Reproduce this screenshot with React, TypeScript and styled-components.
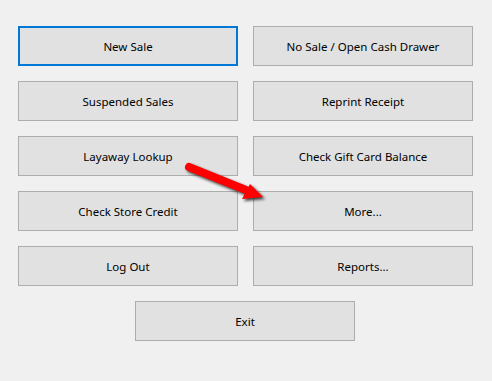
import React from 'react'
import styled, { createGlobalStyle } from 'styled-components'

const GlobalStyle = createGlobalStyle`
  html, body {
    margin: 0;
    padding: 0;
    background: #f0f0f0;
  }
`

const Window = styled.div`
  position: relative;
  width: 492px;
  height: 381px;
  background: #f0f0f0;
  box-sizing: border-box;
  padding: 26px 0 0 18px;
  font-family: "Noto Sans", "Open Sans", sans-serif;
`

const Grid = styled.div`
  display: grid;
  grid-template-columns: 220px 220px;
  grid-auto-rows: 40px;
  column-gap: 15px;
  row-gap: 15px;
  width: 455px;
`

const Button = styled.button<{ $focused?: boolean }>`
  box-sizing: border-box;
  width: 220px;
  height: 40px;
  margin: 0;
  padding: 0;
  background: #e1e1e1;
  border: ${(p) => (p.$focused ? '2px solid #0078d7' : '1px solid #adadad')};
  border-radius: 0;
  color: #000;
  font-family: "Noto Sans", "Open Sans", sans-serif;
  font-size: 11.5px;
  cursor: default;
`

const ExitRow = styled.div`
  grid-column: 1 / span 2;
  padding-left: 117px;
`

const Overlay = styled.svg`
  position: absolute;
  left: 180px;
  top: 155px;
  pointer-events: none;
`

const buttons = [
  'New Sale',
  'No Sale / Open Cash Drawer',
  'Suspended Sales',
  'Reprint Receipt',
  'Layaway Lookup',
  'Check Gift Card Balance',
  'Check Store Credit',
  'More...',
  'Log Out',
  'Reports...',
]

const Arrow = () => (
  <Overlay width="100" height="55" viewBox="0 0 100 55">
    <defs>
      <filter id="sh" x="-20%" y="-20%" width="150%" height="160%">
        <feGaussianBlur stdDeviation="1.6" />
      </filter>
    </defs>
    <g transform="translate(2,2)" filter="url(#sh)" fill="#000" opacity="0.75">
      <line x1="9" y1="12" x2="66" y2="35" stroke="#000" strokeWidth="8" strokeLinecap="round" />
      <polygon points="70,29 62,44 83,42" />
    </g>
    <line x1="9" y1="12" x2="66" y2="35" stroke="#ff0000" strokeWidth="8" strokeLinecap="round" />
    <polygon points="70,29 62,44 83,42" fill="#ff0000" />
  </Overlay>
)

export default function App() {
  return (
    <>
      <GlobalStyle />
      <Window>
        <Grid>
          {buttons.map((b, i) => (
            <Button key={b} $focused={i === 0}>{b}</Button>
          ))}
          <ExitRow>
            <Button>Exit</Button>
          </ExitRow>
        </Grid>
        <Arrow />
      </Window>
    </>
  )
}
